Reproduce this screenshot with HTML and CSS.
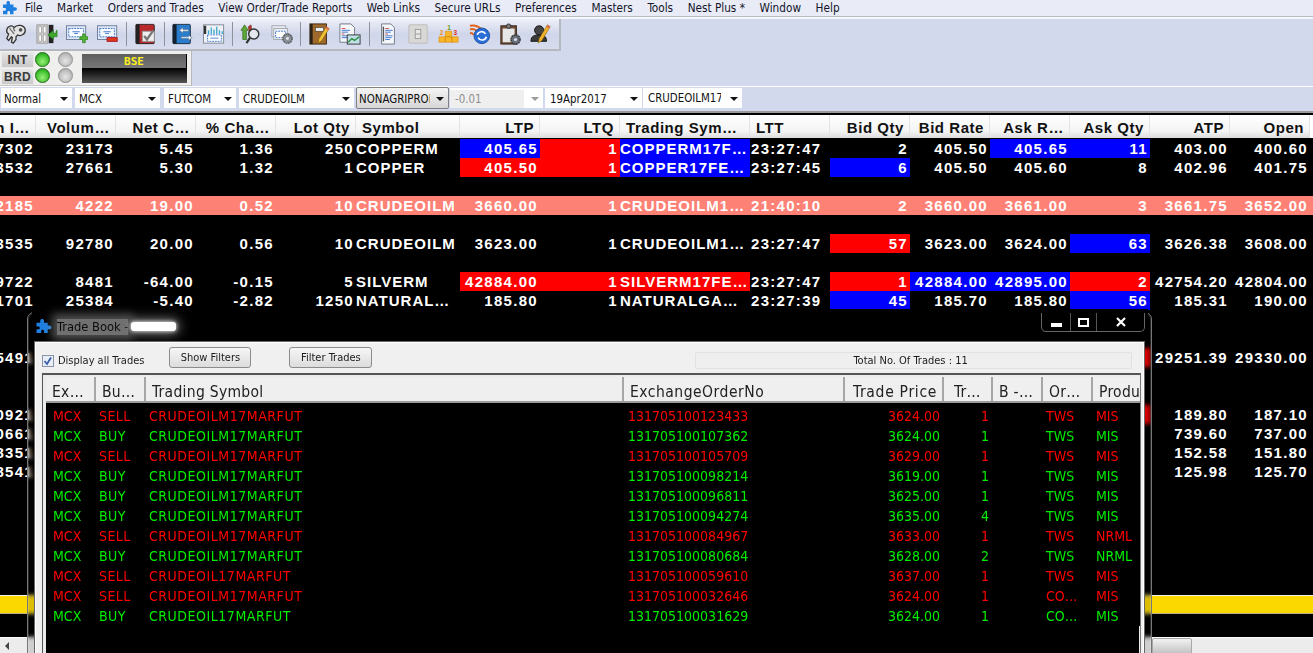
FILE: index.html
```html
<!DOCTYPE html>
<html lang="en">
<head>
<meta charset="utf-8">
<title>Trade Book</title>
<link rel="stylesheet" href="styles.css">
</head>
<body>
<div class="app">
  <nav class="menu">
    <svg class="puzzle" viewBox="0 0 16 16"><path fill="#1f7fe0" d="M0 4h4V2c0-2.500 4-2.500 4 0v2h4v3h2c2.500 0 2.500 4 0 4h-2v4H8v-2c0-2-3-2-3 0v2H0v-4h2c2 0 2-3 0-3H0z"/></svg>
    <span>File</span><span>Market</span><span>Orders and Trades</span><span>View Order/Trade Reports</span><span>Web Links</span><span>Secure URLs</span><span>Preferences</span><span>Masters</span><span>Tools</span><span>Nest Plus *</span><span>Window</span><span>Help</span>
  </nav>

  <div class="toolrow">
    <div class="toolbar">
      <span class="tool"><svg viewBox="0 0 24 24"><path fill="#e4e4e4" stroke="#333" stroke-width="1.400" d="M2 7c1-4 6-5 8-2 3-4 11-3 12 2 1 5-5 8-8 6l-2 2v3l-3 4-2-1 1-5-1-1-3 4-2-2 2-5C2 11 1.500 9 2 7z"/><circle cx="17" cy="7.500" r="2" fill="#555"/><path fill="none" stroke="#666" stroke-width="1.200" d="M5 5c1 3 3 4 5 7M9 5c0 2 1 3 2 4"/></svg></span>
      <span class="tool"><svg viewBox="0 0 24 24"><rect x="1" y="2" width="12" height="20" fill="#cfcfcf" stroke="#999"/><path fill="#fff" stroke="#aaa" d="M3 4h3v7H3zM8 4h3v7H8zM3 13h3v7H3zM8 13h3v7H8z"/><path fill="#222" d="M14 2h5v20h-5z"/><path fill="#3fa52c" stroke="#1e7516" stroke-width=".6" d="M22 8v3h-3V8l-6 5 6 5v-3h4V8z"/></svg></span>
      <span class="tool"><svg viewBox="0 0 24 24"><rect x=".500" y="3" width="21" height="15" fill="#dfe7f4" stroke="#6a7a99"/><rect x="3" y="6" width="16" height="9" fill="#f8fbff" stroke="#3a73d0" stroke-dasharray="2 1"/><path fill="#4a7fd0" d="M7 9h8v1H7zM9 11h4v1H9z"/><path fill="#52b232" stroke="#2d7d17" stroke-width=".7" d="M15 15h3v-3h3v3h3v3h-3v3.500h-3V18h-3z"/></svg></span>
      <span class="tool"><svg viewBox="0 0 24 24"><rect x=".500" y="3" width="21" height="15" fill="#dfe7f4" stroke="#6a7a99"/><rect x="3" y="6" width="16" height="9" fill="#f8fbff" stroke="#3a73d0" stroke-dasharray="2 1"/><path fill="#4a7fd0" d="M7 9h8v1H7zM9 11h4v1H9z"/><rect x="11" y="16" width="11" height="4" fill="#e03a1a" stroke="#a12"/></svg></span>
      <i class="sep"></i>
      <span class="tool"><svg viewBox="0 0 24 24"><rect x="1" y="1.500" width="20" height="21" rx="1" fill="#b9282a" stroke="#222"/><rect x="1" y="1.500" width="4" height="21" fill="#222"/><rect x="8" y="9" width="13" height="11" fill="#eee" stroke="#999"/><path fill="none" stroke="#777" stroke-width="2.500" d="M10 14l3 4 7-10"/></svg></span>
      <i class="sep"></i>
      <span class="tool"><svg viewBox="0 0 24 24"><rect x="1" y="1.500" width="19" height="21" rx="1" fill="#2a7dcc" stroke="#1a2a3a"/><rect x="1" y="1.500" width="4" height="21" fill="#16202c"/><path fill="#e8eef6" stroke="#55708f" stroke-width=".7" d="M8 8l4-3v2h6v2h-6v2zM22 16l-4-3v2h-8v2h8v2z"/></svg></span>
      <span class="tool"><svg viewBox="0 0 24 24"><rect x=".500" y="2" width="22" height="20" fill="#eef1f6" stroke="#7d8792"/><rect x="1" y="3" width="2.500" height="9" fill="#333"/><path stroke="#3aa6c9" stroke-width="1.400" d="M6 12V8M9 12V5M12 12V7M15 12V4M18 12V8M21 12V9"/><rect x="5" y="13" width="15" height="7" fill="#fff" stroke="#3a73d0" stroke-dasharray="2 1"/><path stroke="#4a7fd0" d="M8 16.500h9"/></svg></span>
      <i class="sep"></i>
      <span class="tool"><svg viewBox="0 0 24 24"><path fill="#5ea63a" stroke="#2d6418" stroke-width=".7" d="M1 8l4-6 4 6H7v10H3V8z"/><path fill="#b5392e" stroke="#611" stroke-width=".5" d="M9 4l3-2 1 6-3 2z"/><circle cx="15" cy="12" r="5.500" fill="#e4e8ee" stroke="#333" stroke-width="1.600"/><path stroke="#333" stroke-width="2.400" d="M11 16l-4 6"/></svg></span>
      <span class="tool"><svg viewBox="0 0 24 24"><rect x="1" y="3" width="15" height="12" fill="#e8ebf0" stroke="#a0a6ae"/><rect x="3" y="6" width="15" height="12" fill="#eef0f4" stroke="#a0a6ae"/><rect x="5" y="9" width="11" height="7" fill="#fff" stroke="#3a73d0" stroke-dasharray="2 1"/><circle cx="18" cy="17" r="5" fill="#8a9199" stroke="#555" stroke-width="1.500" stroke-dasharray="2 .6"/><circle cx="18" cy="17" r="1.600" fill="#e0e4ea"/></svg></span>
      <i class="sep"></i>
      <span class="tool"><svg viewBox="0 0 24 24"><rect x="1" y="1" width="18" height="22" fill="#a0692c" stroke="#3a2410"/><rect x="1" y="1" width="3" height="22" fill="#2c2318"/><rect x="7" y="5" width="9" height="4" fill="#eee" stroke="#333" stroke-width=".6"/><path fill="#f2c230" stroke="#7a5a10" stroke-width=".6" d="M19 4l3 2-8 13-4 3 1-5z"/><path fill="#e66a5a" d="M19 4l3 2-1 2-3-2z"/></svg></span>
      <span class="tool"><svg viewBox="0 0 24 24"><path fill="#f4f6fa" stroke="#6f7680" d="M1 1h12l4 4v16H1z"/><path stroke="#d94a3a" d="M3 6h4M3 12h3"/><path stroke="#3a73d0" d="M3 8h9M3 10h7M3 14h6M3 16h6"/><rect x="9" y="13" width="14" height="10" fill="#bfe0e8" stroke="#333"/><path fill="none" stroke="#2d8a3a" stroke-width="1.500" d="M10 21l4-4 3 2 5-4"/></svg></span>
      <i class="sep"></i>
      <span class="tool"><svg viewBox="0 0 24 24"><path fill="#f4f6fa" stroke="#6f7680" d="M5 1h10l4 4v18H5z"/><path stroke="#555" stroke-width="1.500" d="M7 4v16"/><path stroke="#d94a3a" d="M9 6h4M9 12h3"/><path stroke="#3a73d0" d="M9 8h8M9 10h6M9 14h8M9 16h7M9 18h5"/></svg></span>
      <span class="tool"><svg viewBox="0 0 24 24"><rect x="2" y="2" width="20" height="20" rx="1" fill="#d8d8d6" stroke="#bbb"/><rect x="9" y="7" width="6" height="10" fill="#e8e8e6" stroke="#999"/><path stroke="#999" d="M9 12h6"/></svg></span>
      <span class="tool"><svg viewBox="0 0 24 24"><path fill="#f7b52a" stroke="#d98a10" stroke-width=".6" d="M1 15h7v6H1zM8 15h7v6H8zM15 15h7v6h-7zM8 9h7v6H8z"/><text class="ic-num ic-g" x="10" y="7.500">1</text><text class="ic-num ic-o" x="2" y="13">2</text><text class="ic-num ic-r" x="17" y="13">3</text></svg></span>
      <span class="tool"><svg viewBox="0 0 24 24"><path fill="none" stroke="#e0641e" stroke-width="2.200" d="M1 3c5-1 10 1 13 4M1 7c3-1 6 0 8 2M1 11c1 0 3 0 4 2"/><circle cx="14" cy="14" r="8.500" fill="#2a6fd8" stroke="#1c4da0"/><path fill="none" stroke="#fff" stroke-width="1.800" d="M9 13c1-4 7-5 9-1M19 15c-1 4-7 5-9 1"/></svg></span>
      <span class="tool"><svg viewBox="0 0 24 24"><rect x="2" y="3" width="17" height="20" fill="#6a4a34" stroke="#3a281a"/><rect x="4" y="6" width="13" height="15" fill="#e6e6e6"/><circle cx="10.500" cy="3.500" r="2.500" fill="#777" stroke="#333"/><circle cx="18" cy="18" r="5" fill="#67707a" stroke="#333" stroke-width="1.500" stroke-dasharray="2 .6"/><circle cx="18" cy="18" r="1.700" fill="#dde"/></svg></span>
      <span class="tool"><svg viewBox="0 0 24 24"><circle cx="10" cy="8" r="5" fill="#444" stroke="#111"/><path fill="#3a3a3a" stroke="#111" d="M1 20c0-6 4-7 9-7s8 1 8 7z"/><path fill="#f2b32a" stroke="#7a5a10" stroke-width=".6" d="M19 2l3 2-9 15-4 3 1-5z"/><path fill="#e66a5a" d="M19 2l3 2-1 2-3-2z"/></svg></span>
    </div>
  </div>

  <div class="statusrow">
    <div class="status">
      <div class="keys"><span class="key">INT</span><span class="key">BRD</span></div>
      <div class="leds"><i class="led on"></i><i class="led"></i><i class="led on"></i><i class="led"></i></div>
      <div class="ticker"><div class="tick-top">BSE</div><div class="tick-bot"></div></div>
    </div>
  </div>

  <div class="comborow">
    <div class="combo c1"><span>Normal</span></div>
    <div class="combo c2"><span>MCX</span></div>
    <div class="combo c3"><span>FUTCOM</span></div>
    <div class="combo c4"><span>CRUDEOILM</span></div>
    <div class="combo c5 btn"><span>NONAGRIPROD</span></div>
    <div class="combo c6 off"><span>-0.01</span></div>
    <div class="combo c7"><span>19Apr2017</span></div>
    <div class="combo c8"><span>CRUDEOILM17MAR</span></div>
  </div>
  <div class="rule"></div>

  <main class="watch">
    <div class="row head">
      <span>n I…</span><span>Volum…</span><span>Net C…</span><span>% Cha…</span><span>Lot Qty</span><span class="l">Symbol</span><span>LTP</span><span>LTQ</span><span class="l">Trading Sym…</span><span class="l">LTT</span><span>Bid Qty</span><span>Bid Rate</span><span>Ask R…</span><span>Ask Qty</span><span>ATP</span><span>Open</span>
    </div>
    <div class="row"><span>17302</span><span>23173</span><span>5.45</span><span>1.36</span><span>250</span><span class="l">COPPERM</span><span class="b">405.65</span><span class="r">1</span><span class="l b">COPPERM17F…</span><span class="t">23:27:47</span><span>2</span><span>405.50</span><span class="b">405.65</span><span class="b">11</span><span>403.00</span><span>400.60</span></div>
    <div class="row"><span>13532</span><span>27661</span><span>5.30</span><span>1.32</span><span>1</span><span class="l">COPPER</span><span class="r">405.50</span><span class="r">1</span><span class="l b">COPPER17FE…</span><span class="t">23:27:45</span><span class="b">6</span><span>405.50</span><span>405.60</span><span>8</span><span>402.96</span><span>401.75</span></div>
    <div class="row"></div>
    <div class="row salmon"><span>12185</span><span>4222</span><span>19.00</span><span>0.52</span><span>10</span><span class="l">CRUDEOILM</span><span>3660.00</span><span>1</span><span class="l">CRUDEOILM1…</span><span class="t">21:40:10</span><span>2</span><span>3660.00</span><span>3661.00</span><span>3</span><span>3661.75</span><span>3652.00</span></div>
    <div class="row"></div>
    <div class="row"><span>13535</span><span>92780</span><span>20.00</span><span>0.56</span><span>10</span><span class="l">CRUDEOILM</span><span>3623.00</span><span>1</span><span class="l">CRUDEOILM1…</span><span class="t">23:27:47</span><span class="r">57</span><span>3623.00</span><span>3624.00</span><span class="b">63</span><span>3626.38</span><span>3608.00</span></div>
    <div class="row"></div>
    <div class="row"><span>19722</span><span>8481</span><span>-64.00</span><span>-0.15</span><span>5</span><span class="l">SILVERM</span><span class="r">42884.00</span><span class="r">1</span><span class="l r">SILVERM17FE…</span><span class="t">23:27:47</span><span class="r">1</span><span class="b">42884.00</span><span class="b">42895.00</span><span class="r">2</span><span>42754.20</span><span>42804.00</span></div>
    <div class="row"><span>11701</span><span>25384</span><span>-5.40</span><span>-2.82</span><span>1250</span><span class="l">NATURAL…</span><span>185.80</span><span>1</span><span class="l">NATURALGA…</span><span class="t">23:27:39</span><span class="b">45</span><span>185.70</span><span>185.80</span><span class="b">56</span><span>185.31</span><span>190.00</span></div>
    <div class="row"></div>
    <div class="row"></div>
    <div class="row"><span>5491</span><span></span><span></span><span></span><span></span><span></span><span></span><span></span><span></span><span></span><span></span><span></span><span></span><span class="r">&nbsp;</span><span>29251.39</span><span>29330.00</span></div>
    <div class="row"></div>
    <div class="row"></div>
    <div class="row"><span>0921</span><span></span><span></span><span></span><span></span><span></span><span></span><span></span><span></span><span></span><span></span><span></span><span></span><span class="r">&nbsp;</span><span>189.80</span><span>187.10</span></div>
    <div class="row"><span>0661</span><span></span><span></span><span></span><span></span><span></span><span></span><span></span><span></span><span></span><span></span><span></span><span></span><span></span><span>739.60</span><span>737.00</span></div>
    <div class="row"><span>8351</span><span></span><span></span><span></span><span></span><span></span><span></span><span></span><span></span><span></span><span></span><span></span><span></span><span></span><span>152.58</span><span>151.80</span></div>
    <div class="row"><span>8541</span><span></span><span></span><span></span><span></span><span></span><span></span><span></span><span></span><span></span><span></span><span></span><span></span><span></span><span>125.98</span><span>125.70</span></div>
    <div class="spacer"></div>
    <div class="yellow"></div>
  </main>
  <div class="hscroll"><i class="arrow"></i><i class="thumb"></i></div>
</div>

<section class="window">
  <header class="titlebar">
    <svg class="puzzle" viewBox="0 0 16 16"><path fill="#1f7fe0" d="M0 4h4V2c0-2.500 4-2.500 4 0v2h4v3h2c2.500 0 2.500 4 0 4h-2v4H8v-2c0-2-3-2-3 0v2H0v-4h2c2 0 2-3 0-3H0z"/></svg>
    <span class="wtitle">Trade Book -</span><i class="blot"></i>
    <div class="controls">
      <span class="ctl"><i class="ctl-min"></i></span>
      <span class="ctl"><i class="ctl-max"></i></span>
      <span class="ctl ctl-wide"><svg viewBox="0 0 10 10"><path fill="none" stroke="#fff" stroke-width="2.200" d="M1 1l8 8M9 1l-8 8"/></svg></span>
    </div>
  </header>
  <div class="client">
    <div class="filters">
      <label class="check"><span class="box"><svg viewBox="0 0 10 10"><path fill="none" stroke="#3a5fa8" stroke-width="1.800" d="M1.500 5l2.500 3 4-6.500"/></svg></span>Display all Trades</label>
      <span class="wbtn b1">Show Filters</span>
      <span class="wbtn b2">Filter Trades</span>
      <div class="total">Total No. Of Trades : 11</div>
    </div>
    <div class="book">
      <div class="brow bhead">
        <span>Ex…</span><span>Bu…</span><span>Trading Symbol</span><span>ExchangeOrderNo</span><span class="tp">Trade Price</span><span class="tq">Tr…</span><span>B -…</span><span>Or…</span><span>Produ</span>
      </div>
      <div class="brow sell"><span>MCX</span><span>SELL</span><span>CRUDEOILM17MARFUT</span><span>131705100123433</span><span>3624.00</span><span>1</span><span></span><span>TWS</span><span>MIS</span></div>
      <div class="brow buy"><span>MCX</span><span>BUY</span><span>CRUDEOILM17MARFUT</span><span>131705100107362</span><span>3624.00</span><span>1</span><span></span><span>TWS</span><span>MIS</span></div>
      <div class="brow sell"><span>MCX</span><span>SELL</span><span>CRUDEOILM17MARFUT</span><span>131705100105709</span><span>3629.00</span><span>1</span><span></span><span>TWS</span><span>MIS</span></div>
      <div class="brow buy"><span>MCX</span><span>BUY</span><span>CRUDEOILM17MARFUT</span><span>131705100098214</span><span>3619.00</span><span>1</span><span></span><span>TWS</span><span>MIS</span></div>
      <div class="brow buy"><span>MCX</span><span>BUY</span><span>CRUDEOILM17MARFUT</span><span>131705100096811</span><span>3625.00</span><span>1</span><span></span><span>TWS</span><span>MIS</span></div>
      <div class="brow buy"><span>MCX</span><span>BUY</span><span>CRUDEOILM17MARFUT</span><span>131705100094274</span><span>3635.00</span><span>4</span><span></span><span>TWS</span><span>MIS</span></div>
      <div class="brow sell"><span>MCX</span><span>SELL</span><span>CRUDEOILM17MARFUT</span><span>131705100084967</span><span>3633.00</span><span>1</span><span></span><span>TWS</span><span>NRML</span></div>
      <div class="brow buy"><span>MCX</span><span>BUY</span><span>CRUDEOILM17MARFUT</span><span>131705100080684</span><span>3628.00</span><span>2</span><span></span><span>TWS</span><span>NRML</span></div>
      <div class="brow sell"><span>MCX</span><span>SELL</span><span>CRUDEOIL17MARFUT</span><span>131705100059610</span><span>3637.00</span><span>1</span><span></span><span>TWS</span><span>MIS</span></div>
      <div class="brow sell"><span>MCX</span><span>SELL</span><span>CRUDEOILM17MARFUT</span><span>131705100032646</span><span>3624.00</span><span>1</span><span></span><span>CO…</span><span>MIS</span></div>
      <div class="brow buy"><span>MCX</span><span>BUY</span><span>CRUDEOIL17MARFUT</span><span>131705100031629</span><span>3624.00</span><span>1</span><span></span><span>CO…</span><span>MIS</span></div>
    </div>
  </div>
</section>
</body>
</html>
```
FILE: styles.css
```css
* { box-sizing: border-box; }
html, body { margin: 0; height: 100%; overflow: hidden; background: #000; }
body { font-family: "DejaVu Sans", "Liberation Sans", sans-serif; }

.app { display: flex; flex-direction: column; height: 653px; }

/* menu */
.menu { flex: none; height: 19px; display: flex; align-items: flex-start; gap: 14.6px; padding: 1px 0 0 2px; background: linear-gradient(#e9ecf6 0 16px, #b9bcc4 16px 17px, #f7f8fc 17px); font-size: 11.7px; font-stretch: condensed; color: #14142a; line-height: 14px; white-space: nowrap; }
.menu .puzzle { width: 16px; height: 14px; margin-right: -7.6px; }
.puzzle { flex: none; }

/* toolbars */
.toolrow { flex: none; height: 32px; background: #d3d9ec; }
.toolbar { width: 561px; height: 32px; display: flex; align-items: center; padding-left: 1px; background: linear-gradient(#eef0f8, #d0d6ea 50%, #d7dcee); border-right: 2px solid #b5b8bf; border-bottom: 2px solid #b5b8bf; }
.tool { flex: none; width: 30.6px; display: flex; justify-content: center; }
.tool svg { width: 22px; height: 22px; }
.sep { flex: none; width: 1px; height: 24px; margin: 0 3px; background: #8e929c; }
.ic-num { font: bold 7px "Liberation Sans", sans-serif; }
.ic-g { fill: #5a9a20; }
.ic-o { fill: #f08a10; }
.ic-r { fill: #e03020; }

.statusrow { flex: none; height: 35px; background: #d3d9ec; }
.status { width: 192px; height: 35px; display: flex; padding: 1px 0 0 1px; background: #efefee; border-right: 1px solid #b5b8bf; border-bottom: 1px solid #c8c8c8; }
.keys { width: 33px; display: flex; flex-direction: column; gap: 1px; }
.key { height: 16px; background: linear-gradient(#e4e4e4, #c9c9c9); border: 1px solid #e9e9e9; font: bold 12px/14px "Liberation Sans", sans-serif; color: #3b3b3b; text-align: center; letter-spacing: .3px; }
.leds { width: 48px; display: grid; grid-template-columns: 23px 23px; grid-auto-rows: 16px; padding: 0 0 0 1px; align-content: start; }
.led { width: 15px; height: 15px; border-radius: 50%; background: radial-gradient(circle at 50% 60%, #e6e6e6, #b7b7b7 70%, #8a8a8a); border: 1px solid #8f8f8f; }
.led.on { background: radial-gradient(circle at 50% 65%, #9af07a, #3fc02c 60%, #1f8a18); border-color: #1d6a17; }
.ticker { width: 105px; margin-top: 2px; }
.tick-top { height: 14px; background: linear-gradient(#5e5e5e, #777); border-right: 1px solid #000; color: #fff21c; font: bold 11px/15px "DejaVu Sans Mono", monospace; text-align: center; }
.tick-bot { height: 15px; background: linear-gradient(#000, #555); }

.comborow { flex: none; height: 25px; display: flex; align-items: flex-start; padding: 2px 0 0 1px; background: linear-gradient(#fff 0 1px, #d3d9ec 1px); }
.combo { flex: none; height: 20px; position: relative; display: flex; align-items: center; padding: 1px 18px 0 4px; background: #fff; font-size: 11.4px; font-stretch: condensed; color: #111; white-space: nowrap; overflow: hidden; }
.combo span { display: block; overflow: hidden; }
.combo::after { content: ""; position: absolute; right: 4px; top: 9px; border: 4px solid transparent; border-top: 4px solid #111; border-bottom: 0; }
.c1 { width: 71px; padding-left: 3px; }
.c2 { width: 85px; margin-left: 3px; }
.c3 { width: 72px; margin-left: 4px; }
.c4 { width: 115px; margin-left: 3px; }
.c5 { width: 93px; margin-left: 2px; }
.c6 { width: 93px; margin-left: 1px; }
.c7 { width: 97px; margin-left: 2px; padding-left: 5px; }
.c8 { width: 99px; margin-left: 1px; padding: 0 21px 0 5px; }
.combo.btn { background: linear-gradient(#f4f4f4, #d6d6d6); border: 1px solid #808080; border-radius: 2px; margin-top: -1px; height: 22px; padding-left: 2px; }
.combo.off { color: #8d8d8d; padding-left: 0; }
.combo.off span { background: #efefef; width: 74px; height: 18px; line-height: 18px; padding-left: 5px; }
.combo.off::after { border-top-color: #9a9a9a; }

.rule { flex: none; height: 4px; background: linear-gradient(#9a9a9a 0 2px, #000 2px); }

/* market watch */
.watch { flex: 1; min-height: 0; display: flex; flex-direction: column; background: #000; font: bold 15px/19px "Liberation Sans", Arial, sans-serif; letter-spacing: 1.3px; color: #fff; }
.row { flex: none; height: 19px; display: grid; grid-template-columns: 36px 80px 80px 80px 80px 104px 80px 80px 130px 80px 80px 80px 80px 80px 80px 80px; }
.row > span { display: flex; justify-content: flex-end; padding-right: 2px; overflow: hidden; white-space: nowrap; }
.row > span.l { justify-content: flex-start; padding: 0; letter-spacing: 1px; }
.row > span.t { justify-content: flex-start; padding: 0 0 0 1px; }
.row > span.b { background: #0000fe; }
.row > span.r { background: #fe0000; }
.row.salmon { background: #fe8176; }
.row.head { height: 24px; background: linear-gradient(#fff 0 23px, #000 23px); color: #111; letter-spacing: .55px; }
.row.head > span { height: 23px; line-height: 26px; background: linear-gradient(#fff, #f4f4f4 70%, #dcdcdc); border-right: 1px solid #e4e4e4; padding-right: 5px; }
.row.head > span.l { padding-left: 6px; letter-spacing: .55px; }
.spacer { flex: 1; }
.yellow { flex: none; height: 19px; margin-bottom: 23px; background: #fbd800; border-top: 1px solid #f4f4e8; border-bottom: 1px solid #b8b088; }
.hscroll { flex: none; height: 16px; position: relative; background: #ececec; border-top: 1px solid #fff; }
.arrow { position: absolute; left: 5px; top: 4px; border: 4px solid transparent; border-right: 4px solid #444; border-left: 0; }
.thumb { position: absolute; left: 1152px; top: 0; width: 40px; height: 16px; background: linear-gradient(#f2f2f2, #c4c4c4); border: 1px solid #a8a8a8; border-radius: 2px; }

/* trade book window */
.window { position: absolute; left: 27px; top: 312px; width: 1125px; height: 360px; padding: 0 7px; border: 1px solid #777; border-radius: 7px 7px 0 0; background: rgba(0,0,0,.12); backdrop-filter: blur(2px); box-shadow: inset 0 0 0 1px rgba(255,255,255,.15); }
.titlebar { height: 29px; display: flex; align-items: flex-start; margin: 0 0 0 1px; background: #000; box-shadow: 0 0 0 4px #000; }
.titlebar .puzzle { width: 16px; height: 15px; margin: 6px 5px 0 0; }
.wtitle { margin-top: 6px; font-size: 12.8px; line-height: 16px; font-stretch: condensed; color: #0c0c0c; background: rgba(150,150,150,.75); box-shadow: 0 0 10px 5px rgba(150,150,150,.55); white-space: nowrap; }
.blot { width: 45px; height: 9px; margin: 9px 0 0 3px; background: #fff; box-shadow: 0 0 4px #fff, 0 0 12px 3px #777; border-radius: 3px; }
.controls { display: flex; margin-left: auto; margin-right: -1px; height: 19px; border: 1px solid #666; border-top: 0; border-radius: 0 0 5px 5px; }
.ctl { width: 29px; display: flex; align-items: center; justify-content: center; border-right: 1px solid #555; }
.ctl + .ctl { width: 26px; }
.ctl.ctl-wide { width: 47px; border-right: 0; }
.ctl svg { width: 10px; height: 10px; }
.ctl-min { width: 11px; height: 4px; background: #fff; margin-top: 5px; }
.ctl-max { width: 11px; height: 9px; border: 2px solid #fff; }

.client { position: relative; height: 330px; display: flex; flex-direction: column; background: #f0f0f0; border: 1px solid #fff; border-bottom: 0; outline: 1px solid #666; }
.filters { flex: none; height: 30px; display: flex; align-items: flex-start; font-size: 11px; font-stretch: condensed; color: #1b1b1b; white-space: nowrap; }
.check { display: flex; align-items: center; gap: 4px; margin: 11px 0 0 6px; line-height: 13px; }
.box { width: 12px; height: 12px; background: #e8edf6; border: 1px solid #8a94a8; display: flex; }
.box svg { width: 10px; height: 10px; }
.wbtn { height: 21px; margin-top: 4px; border: 1px solid #8c8c8c; border-radius: 3px; background: linear-gradient(#f6f6f6, #dcdcdc); display: flex; align-items: center; justify-content: center; }
.b1 { width: 82px; margin-left: 25px; }
.b2 { width: 83px; margin-left: 38px; }
.total { width: 437px; height: 17px; margin: 9px 0 0 323px; padding-left: 157px; line-height: 15px; background: #efefef; border: 1px solid #dfe3e6; border-radius: 2px; }

.book { flex: 1; min-height: 0; margin-left: 6px; width: 1099px; padding-left: 3px; background: linear-gradient(90deg, #ececec 3px, #000 3px, #000 calc(100% - 1px), #ececec 0); border-top: 2px solid #555; border-left: 1px solid #555; border-right: 1px solid #777; font-size: 14px; font-stretch: condensed; }
.brow { display: grid; grid-template-columns: 50px 50px 478px 221px 99px 49px 50px 50px 47px; height: 20px; line-height: 20px; background: #000; white-space: nowrap; }
.brow > span { padding-left: 3px; overflow: hidden; }
.brow > span:first-child { padding-left: 7px; }
.brow > span:nth-child(2) { letter-spacing: .4px; }
.brow > span:nth-child(3) { letter-spacing: .53px; }
.brow > span:nth-child(4) { padding-left: 4px; }
.brow > span:nth-child(5), .brow > span:nth-child(6) { padding: 0 4px 0 0; text-align: right; }
.sell { color: #f00; }
.buy { color: #0e0; }
.brow.bhead { height: 28px; background: #ececec; border-top: 2px solid #ececec; border-bottom: 2px solid #9b9b9b; color: #222; font-size: 15.5px; line-height: 24px; margin-bottom: 3px; box-shadow: 0 3px 0 #000; }
.brow.bhead > span { padding: 3px 0 0 6px; border-right: 2px solid #a6a6a6; background: #efefef; text-align: left; letter-spacing: .3px; }
.brow.bhead > span:nth-child(4) { letter-spacing: .5px; }
.brow.bhead > span:nth-child(5) { padding-left: 8px; letter-spacing: .7px; }
.brow.bhead > span:nth-child(6) { padding-left: 10px; }
.brow.bhead > span:last-child { border-right: 0; }
```
